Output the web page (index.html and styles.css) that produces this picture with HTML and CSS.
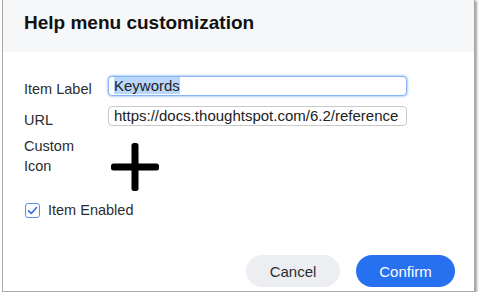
FILE: index.html
```html
<!DOCTYPE html>
<html lang="en">
<head>
    <meta charset="UTF-8">
    <meta name="viewport" content="width=device-width, initial-scale=1.0">
    <title>Help menu customization</title>
    <link rel="stylesheet" href="styles.css">
</head>
<body>
    <div class="dialog">
        <div class="dialog-header">
            <h1>Help menu customization</h1>
        </div>
        <div class="dialog-body">
            <div class="form">
                <label class="label label-one" for="itemLabel">Item Label</label>
                <div class="field field-one">
                    <input type="text" id="itemLabel" class="input input-focus" value="">
                    <span class="input-value"><span class="selected">Keywords</span></span>
                </div>

                <label class="label label-url" for="itemUrl">URL</label>
                <div class="field">
                    <div class="input input-url" id="itemUrl">https://docs.thoughtspot.com/6.2/reference</div>
                </div>

                <div class="label label-icon">Custom<br>Icon</div>
                <div class="field field-icon">
                    <svg width="52" height="52" viewBox="0 0 52 52">
                        <rect x="22.5" y="2" width="7" height="48" rx="2.5" fill="#000"/>
                        <rect x="2" y="22.5" width="48" height="7" rx="2.5" fill="#000"/>
                    </svg>
                </div>
            </div>

            <div class="check-row">
                <span class="checkbox">
                    <svg width="11" height="11" viewBox="0 0 11 11">
                        <path d="M1.5 5.8 L4.3 8.5 L9.5 2.5" fill="none" stroke="#2f6fe0" stroke-width="1.6" stroke-linecap="round" stroke-linejoin="round"/>
                    </svg>
                </span>
                <span class="check-text">Item Enabled</span>
            </div>

            <div class="actions">
                <button class="btn btn-cancel">Cancel</button>
                <button class="btn btn-confirm">Confirm</button>
            </div>
        </div>
    </div>
</body>
</html>
```

FILE: styles.css
```css
body {
    margin: 0;
    padding: 0;
    background: #fff;
    font-family: "Liberation Sans", Arial, sans-serif;
    color: #2b2d31;
}
.dialog {
    margin-left: 2px;
    margin-top: -2px;
    width: 473px;
    height: 294px;
    border: 1px solid #a9a9a9;
    background: #fff;
    box-shadow: 2px 3px 2px rgba(0, 0, 0, 0.35);
    box-sizing: border-box;
}
.dialog-header {
    background: #f6f7f9;
    height: 53px;
    padding: 13px 0 0 21px;
    box-sizing: border-box;
}
.dialog-header h1 {
    margin: 0;
    font-size: 19px;
    font-weight: bold;
    color: #111;
    line-height: 22px;
}
.dialog-body {
    padding: 24px 0 0 21px;
}
.form {
    display: grid;
    grid-template-columns: 84px 299px;
    grid-template-rows: 20px 20px auto;
    row-gap: 10px;
}
.label {
    font-size: 14.5px;
    color: #2b2d31;
    line-height: 20px;
}
.label-one {
    padding-top: 3px;
}
.label-url {
    padding-top: 4px;
}
.label-icon {
    padding-top: 0;
}
.field {
    position: relative;
}
.input {
    width: 100%;
    height: 20px;
    box-sizing: border-box;
    border: 1px solid #c9c9c9;
    border-radius: 4px;
    font-family: "Liberation Sans", Arial, sans-serif;
    font-size: 15px;
    color: #222;
    padding: 0 5px;
    margin: 0;
    background: #fff;
    line-height: 18px;
    white-space: nowrap;
    overflow: hidden;
}
.input-focus {
    border-color: #86b4f4;
    box-shadow: 0 0 2px 1px #b6d2fa;
    outline: none;
}
.input-value {
    position: absolute;
    left: 6px;
    top: 1px;
    font-size: 15px;
    line-height: 18px;
    color: #222;
}
.selected {
    background: #b9d6fb;
}
.field-icon {
    padding-top: 5px;
}
.field-icon svg {
    display: block;
    margin-left: 1px;
}
.check-row {
    display: flex;
    align-items: center;
    margin-top: 9px;
}
.checkbox {
    width: 15px;
    height: 15px;
    box-sizing: border-box;
    border: 1.5px solid #5b8fe8;
    border-radius: 3px;
    display: flex;
    align-items: center;
    justify-content: center;
    margin-left: 1px;
}
.check-text {
    margin-left: 8px;
    font-size: 14.5px;
    color: #2b2d31;
}
.actions {
    display: flex;
    justify-content: flex-end;
    gap: 16px;
    margin-top: 37px;
    padding-right: 19px;
}
.btn {
    height: 32px;
    border: none;
    border-radius: 16px;
    font-family: "Liberation Sans", Arial, sans-serif;
    font-size: 15px;
    cursor: pointer;
}
.btn-cancel {
    width: 94px;
    background: #eceef2;
    color: #2b2d31;
}
.btn-confirm {
    width: 99px;
    background: #2770ef;
    color: #fff;
}
```
